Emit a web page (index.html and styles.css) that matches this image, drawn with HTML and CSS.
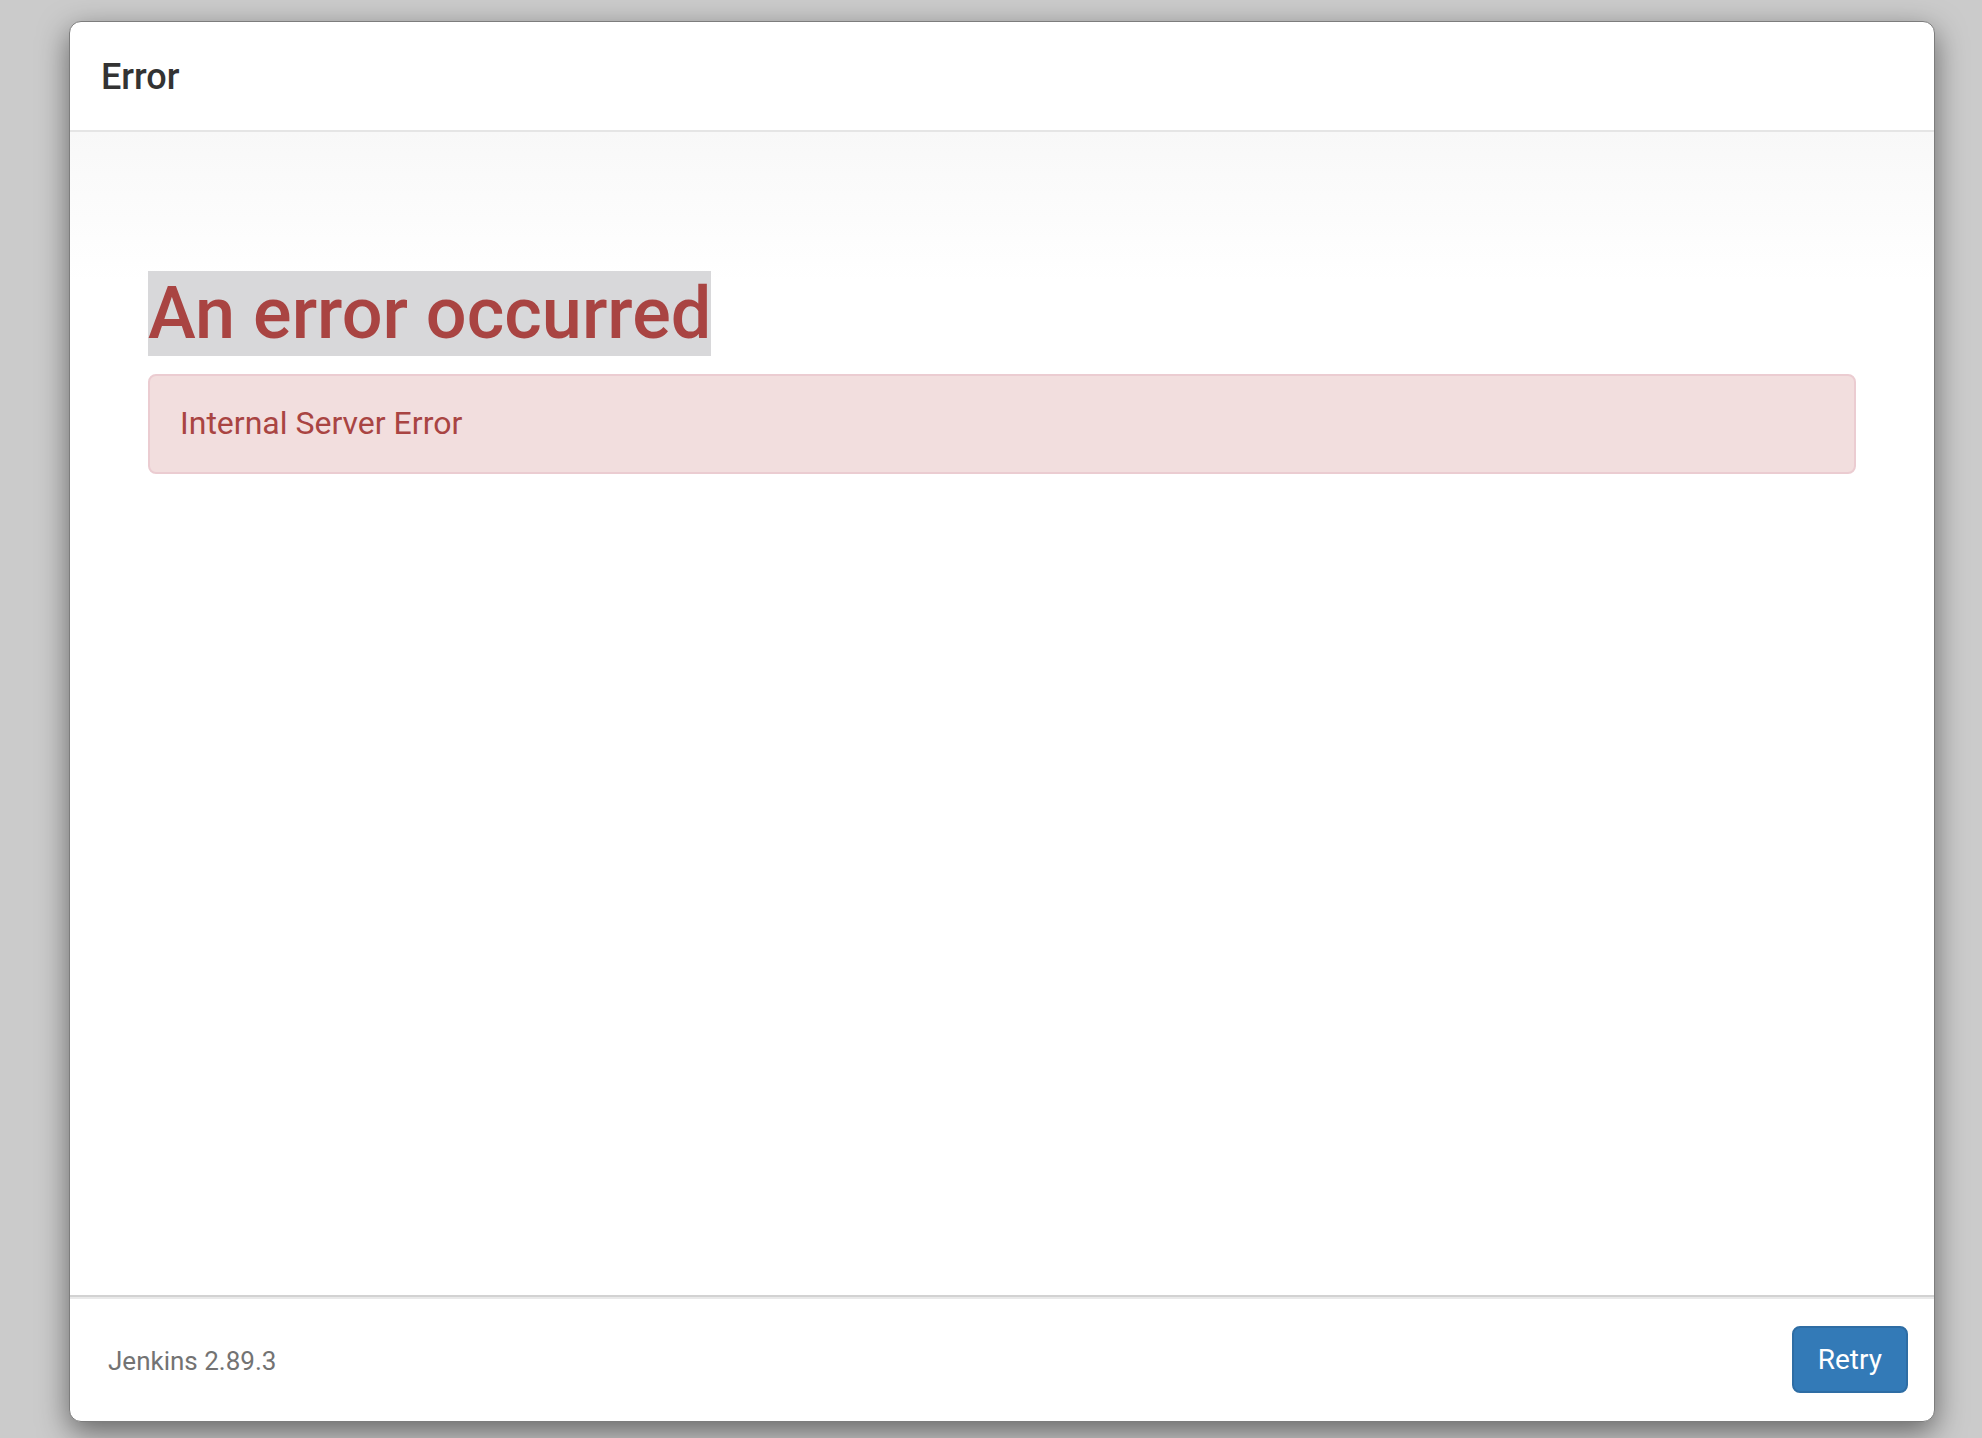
FILE: index.html
```html
<!DOCTYPE html>
<html lang="en">
<head>
    <meta charset="UTF-8">
    <meta name="viewport" content="width=device-width, initial-scale=1.0">
    <title>Error</title>
    <link rel="stylesheet" href="styles.css">
</head>
<body>
    <div class="dialog">
        <div class="dialog-header">
            <h4 class="dialog-title">Error</h4>
        </div>
        <div class="dialog-body">
            <h1 class="error-title"><span>An error occurred</span></h1>
            <div class="alert">Internal Server Error</div>
        </div>
        <div class="dialog-footer">
            <span class="version">Jenkins 2.89.3</span>
            <button class="btn-retry">Retry</button>
        </div>
    </div>
</body>
</html>
```

FILE: styles.css
```css
* {
    margin: 0;
    padding: 0;
    box-sizing: border-box;
    font-family: Roboto, "Liberation Sans", sans-serif;
}

body {
    background: #cbcbcb;
    height: 100vh;
    overflow: hidden;
}

.dialog {
    margin: 21px 0 0 69px;
    width: 1866px;
    height: 1401px;
    background: #fff;
    border: 1px solid #7d7d7d;
    border-radius: 12px;
    box-shadow: 0 10px 30px rgba(0, 0, 0, 0.5);
    display: flex;
    flex-direction: column;
    overflow: hidden;
}

.dialog-header {
    padding: 35px 31px 33px;
    border-bottom: 2px solid #e5e5e5;
}

.dialog-title {
    font-size: 36px;
    line-height: 40px;
    font-weight: 500;
    color: #333;
}

.dialog-body {
    flex: 1;
    padding: 140px 78px 0;
    background: linear-gradient(#f8f8f8, #fff 150px);
}

.error-title {
    font-size: 72px;
    line-height: 84px;
    font-weight: 500;
    color: #a94442;
    margin-bottom: 18px;
}

.error-title span {
    background: #d8d8da;
}

.alert {
    background: #f2dede;
    border: 2px solid #ebccd1;
    border-radius: 8px;
    padding: 27px 30px 29px;
    font-size: 32px;
    line-height: 40px;
    color: #a94442;
}

.dialog-footer {
    height: 126px;
    border-top: 2px solid #d2d2d2;
    box-shadow: inset 0 2px 0 #e9e9e9;
    padding: 0 26px 0 38px;
    display: flex;
    align-items: center;
    justify-content: space-between;
}

.version {
    font-size: 26px;
    color: #737373;
    margin-top: 3px;
}

.btn-retry {
    height: 67px;
    padding: 0 24px;
    font-size: 28px;
    line-height: 63px;
    color: #fff;
    background: #337ab7;
    border: 2px solid #2e6da4;
    border-radius: 8px;
    cursor: pointer;
}
```
